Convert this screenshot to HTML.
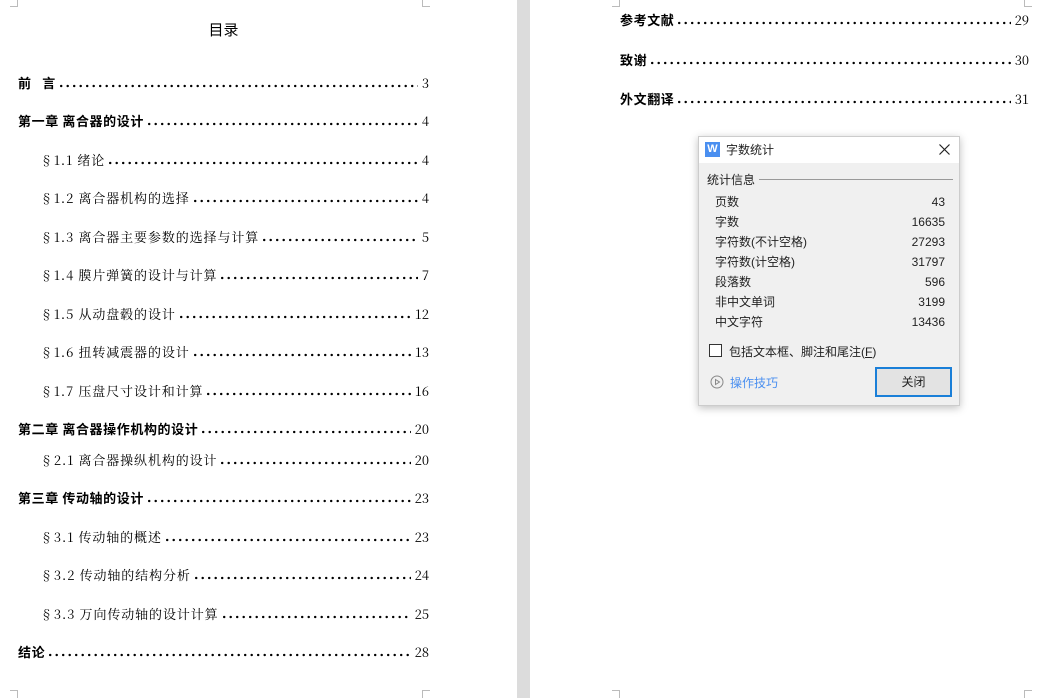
<!DOCTYPE html>
<html><head><meta charset="utf-8"><style>
*{margin:0;padding:0;box-sizing:border-box}
body{width:1045px;height:698px;position:relative;background:#fff;font-family:"Liberation Sans","Noto Sans CJK SC",sans-serif;color:#000;overflow:hidden}
.gap{position:absolute;left:517px;top:0;width:13px;height:698px;background:#dcdcdc}
.row{position:absolute;height:18px;line-height:18px;display:flex;align-items:baseline;font-family:"Noto Serif CJK SC","Liberation Serif",serif;font-size:13px;white-space:nowrap}
.row i{font-style:normal;letter-spacing:0.9px}
.row b{font-family:"Noto Sans CJK SC",sans-serif;font-weight:bold;letter-spacing:0.6px}
.row .d{flex:1;align-self:flex-end;height:4px;margin:0 4px 4px 4px;background:radial-gradient(circle at 1.2px 2px,#000 1px,transparent 1.4px) 0 0/6.5px 4px repeat-x}
.cor{position:absolute;border-color:#bbb;border-style:solid;width:8px;height:8px}
.dlg{position:absolute;left:698px;top:136px;width:262px;height:270px;background:#f0f0f0;border:1px solid #ccc;box-shadow:0 2px 8px rgba(0,0,0,.25);font-family:"Liberation Sans","Noto Sans CJK SC",sans-serif;font-size:12px;color:#222}
.tb{height:26px;background:#fff;position:relative}
.st{position:absolute;left:16px;width:230px;display:flex;justify-content:space-between;align-items:baseline;line-height:16px}
</style></head><body>
<div class="gap"></div>
<div class="cor" style="left:10px;top:-1px;border-width:0 1px 1px 0"></div>
<div class="cor" style="left:422px;top:-1px;border-width:0 0 1px 1px"></div>
<div class="cor" style="left:10px;top:690px;border-width:1px 1px 0 0"></div>
<div class="cor" style="left:422px;top:690px;border-width:1px 0 0 1px"></div>
<div class="cor" style="left:612px;top:-1px;border-width:0 1px 1px 0"></div>
<div class="cor" style="left:1024px;top:-1px;border-width:0 0 1px 1px"></div>
<div class="cor" style="left:612px;top:690px;border-width:1px 1px 0 0"></div>
<div class="cor" style="left:1024px;top:690px;border-width:1px 0 0 1px"></div>
<div style="position:absolute;left:0;width:447px;top:19px;text-align:center;font-size:15px">目录</div>

<div class="row" style="left:18px;width:411px;top:74px"><b>前&nbsp;&nbsp;&nbsp;言</b><span class="d"></span>3</div>
<div class="row" style="left:18px;width:411px;top:112px"><b>第一章 离合器的设计</b><span class="d"></span>4</div>
<div class="row" style="left:40px;width:389px;top:151px"><i>§1.1 绪论</i><span class="d"></span>4</div>
<div class="row" style="left:40px;width:389px;top:189px"><i>§1.2 离合器机构的选择</i><span class="d"></span>4</div>
<div class="row" style="left:40px;width:389px;top:228px"><i>§1.3 离合器主要参数的选择与计算</i><span class="d"></span>5</div>
<div class="row" style="left:40px;width:389px;top:266px"><i>§1.4 膜片弹簧的设计与计算</i><span class="d"></span>7</div>
<div class="row" style="left:40px;width:389px;top:305px"><i>§1.5 从动盘毂的设计</i><span class="d"></span>12</div>
<div class="row" style="left:40px;width:389px;top:343px"><i>§1.6 扭转减震器的设计</i><span class="d"></span>13</div>
<div class="row" style="left:40px;width:389px;top:382px"><i>§1.7 压盘尺寸设计和计算</i><span class="d"></span>16</div>
<div class="row" style="left:18px;width:411px;top:420px"><b>第二章 离合器操作机构的设计</b><span class="d"></span>20</div>
<div class="row" style="left:40px;width:389px;top:451px"><i>§2.1 离合器操纵机构的设计</i><span class="d"></span>20</div>
<div class="row" style="left:18px;width:411px;top:489px"><b>第三章 传动轴的设计</b><span class="d"></span>23</div>
<div class="row" style="left:40px;width:389px;top:528px"><i>§3.1 传动轴的概述</i><span class="d"></span>23</div>
<div class="row" style="left:40px;width:389px;top:566px"><i>§3.2 传动轴的结构分析</i><span class="d"></span>24</div>
<div class="row" style="left:40px;width:389px;top:605px"><i>§3.3 万向传动轴的设计计算</i><span class="d"></span>25</div>
<div class="row" style="left:18px;width:411px;top:643px"><b>结论</b><span class="d"></span>28</div>

<div class="row" style="left:620px;width:409px;top:11px"><b>参考文献</b><span class="d"></span>29</div>
<div class="row" style="left:620px;width:409px;top:51px"><b>致谢</b><span class="d"></span>30</div>
<div class="row" style="left:620px;width:409px;top:90px"><b>外文翻译</b><span class="d"></span>31</div>

<div class="dlg">
 <div class="tb">
  <div style="position:absolute;left:6px;top:5px;width:15px;height:15px;background:#4a8ff0;color:#fff;font-size:11px;line-height:15px;text-align:center;font-weight:bold">W</div>
  <div style="position:absolute;left:27px;top:4px;font-size:12px">字数统计</div>
  <svg style="position:absolute;left:240px;top:7px" width="11" height="11"><path d="M0.5 0.5L10.5 10.5M10.5 0.5L0.5 10.5" stroke="#222" stroke-width="1.2"/></svg>
 </div>
 <div style="position:absolute;left:8px;top:34px">统计信息</div>
 <div style="position:absolute;left:60px;top:42px;width:194px;height:1px;background:#999"></div>
 <div class="st" style="top:57px"><span>页数</span><span>43</span></div>
 <div class="st" style="top:77px"><span>字数</span><span>16635</span></div>
 <div class="st" style="top:97px"><span>字符数(不计空格)</span><span>27293</span></div>
 <div class="st" style="top:117px"><span>字符数(计空格)</span><span>31797</span></div>
 <div class="st" style="top:137px"><span>段落数</span><span>596</span></div>
 <div class="st" style="top:157px"><span>非中文单词</span><span>3199</span></div>
 <div class="st" style="top:177px"><span>中文字符</span><span>13436</span></div>
 <div style="position:absolute;left:10px;top:207px;width:13px;height:13px;border:1px solid #333;background:#fff"></div>
 <div style="position:absolute;left:30px;top:206px">包括文本框、脚注和尾注(<u>F</u>)</div>
 <svg style="position:absolute;left:11px;top:238px" width="14" height="14"><circle cx="7" cy="7" r="6" fill="none" stroke="#888"/><path d="M5.5 4.5L9.5 7L5.5 9.5Z" fill="none" stroke="#888"/></svg>
 <div style="position:absolute;left:31px;top:237px;color:#4a8ff0">操作技巧</div>
 <div style="position:absolute;left:176px;top:230px;width:77px;height:30px;border:2px solid #1a7fd8;background:#e3e3e3;text-align:center;line-height:26px">关闭</div>
</div>
</body></html>
